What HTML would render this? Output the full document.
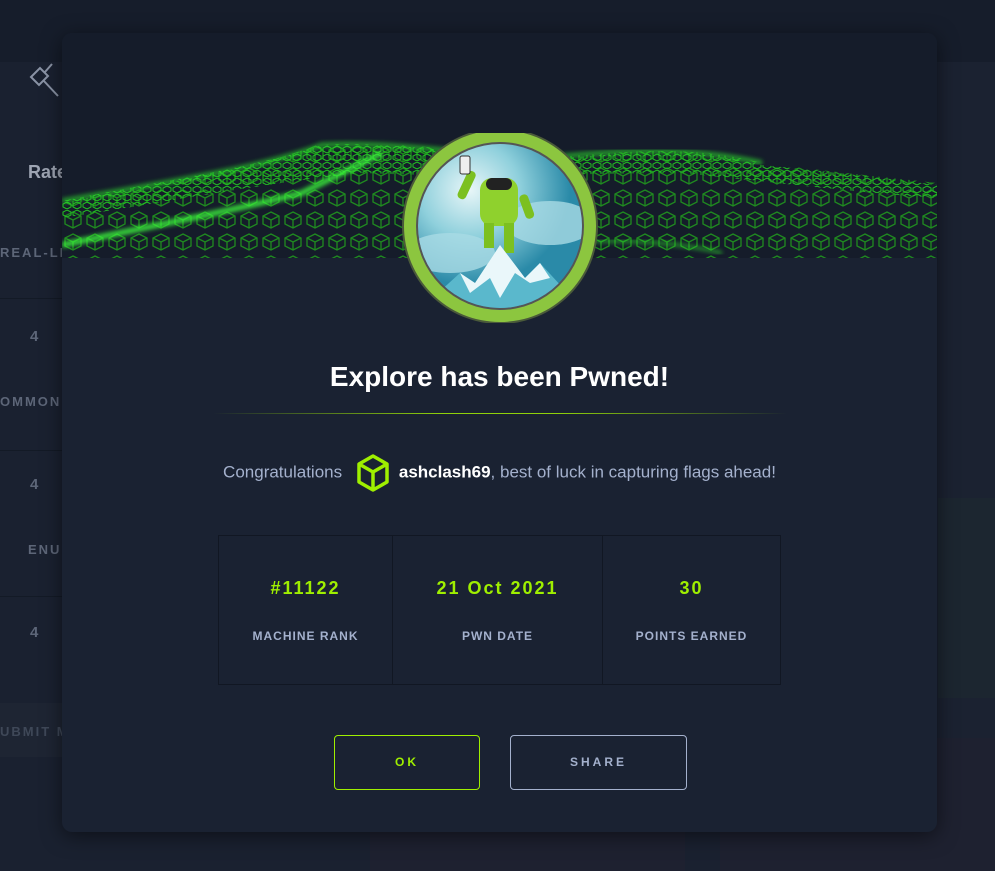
<!DOCTYPE html>
<html><head><meta charset="utf-8"><style>
*{margin:0;padding:0;box-sizing:border-box}
body{width:995px;height:871px;overflow:hidden;background:#1a2130;font-family:"Liberation Sans",sans-serif;position:relative}
.abs{position:absolute}
.bgtxt{position:absolute;color:#5d6678;font-size:13px;font-weight:bold;letter-spacing:2px}
.modal{position:absolute;left:62px;top:33px;width:875px;height:799px;background:#1a2232;border-radius:10px;box-shadow:0 4px 20px rgba(0,0,0,.5);overflow:hidden}
.banner{position:absolute;left:0;top:0;width:875px;height:225px;background:#151c2a}
h1{position:absolute;left:0;width:875px;top:328px;text-align:center;color:#fff;font-size:28px;font-weight:bold}
.div{position:absolute;left:151px;top:380px;width:574px;height:1px;background:linear-gradient(90deg,rgba(159,239,0,0),#8fd10a 40%,#8fd10a 60%,rgba(159,239,0,0))}
.cong{position:absolute;left:0;width:875px;top:421px;text-align:center;color:#a4b1cd;font-size:17px;line-height:30px}
.cong b{color:#fff}
.stats{position:absolute;left:156px;top:502px;width:563px;height:150px;border:1px solid #111723;display:flex}
.c{border-right:1px solid #111723;text-align:center}
.c:last-child{border-right:none}
.v{margin-top:42px;color:#9fef00;font-weight:bold;font-size:18px;letter-spacing:2px}
.l{margin-top:30px;color:#a4b1cd;font-weight:bold;font-size:12px;letter-spacing:1px}
.btn{position:absolute;top:702px;height:55px;border-radius:4px;text-align:center;line-height:53px;font-weight:bold;font-size:12px;letter-spacing:3px}
</style></head><body>
<div class="abs" style="left:0;top:0;width:995px;height:62px;background:#161d2b"></div>
<div class="abs" style="left:938px;top:62px;width:57px;height:770px;background:#1b2231"></div>
<div class="abs" style="left:938px;top:498px;width:57px;height:200px;background:#1c2630"></div>
<div class="abs" style="left:720px;top:738px;width:275px;height:133px;background:#1e2130"></div>
<div class="abs" style="left:370px;top:832px;width:315px;height:39px;background:#1e2130"></div>
<svg class="abs" style="left:28px;top:60px" width="40" height="40"><path d="M3 17 L12 8 L20 16 L11 25 Z M17 12 L24 4 M15 20 L30 36" stroke="#8a93a5" stroke-width="2" fill="none"/></svg>
<div class="abs" style="left:28px;top:162px;color:#9ea5b3;font-size:18px;font-weight:bold">Rate</div>
<div class="bgtxt" style="left:0;top:245px">REAL-LIFE</div>
<div class="abs" style="left:0;top:298px;width:62px;height:1px;background:#131a26"></div>
<div class="bgtxt" style="left:30px;top:328px;font-size:15px">4</div>
<div class="bgtxt" style="left:0;top:394px">OMMON V</div>
<div class="abs" style="left:0;top:450px;width:62px;height:1px;background:#131a26"></div>
<div class="bgtxt" style="left:30px;top:476px;font-size:15px">4</div>
<div class="bgtxt" style="left:28px;top:542px">ENUM</div>
<div class="abs" style="left:0;top:596px;width:62px;height:1px;background:#131a26"></div>
<div class="bgtxt" style="left:30px;top:624px;font-size:15px">4</div>
<div class="abs" style="left:0;top:703px;width:62px;height:54px;background:#1e2533"></div>
<div class="bgtxt" style="left:0;top:724px;color:#3f4858">UBMIT M</div>

<div class="modal">
<div class="banner">
<svg width="875" height="225">
<defs>
<pattern id="cb" width="22" height="22" patternUnits="userSpaceOnUse"><path d="M11 3 L19 7 L19 15 L11 19 L3 15 L3 7 Z M3 7 L11 11 L19 7 M11 11 L11 19" stroke="#1f8a1f" stroke-width="1.3" fill="none"/></pattern>
<pattern id="cs" width="10" height="8" patternUnits="userSpaceOnUse"><path d="M5 1 L9 3 L9 6 L5 8 L1 6 L1 3 Z" stroke="#22c022" stroke-width="1" fill="none"/></pattern>
<filter id="bl"><feGaussianBlur stdDeviation="2"/></filter>
</defs>
<path d="M0 170 C100 150 200 135 260 110 C320 105 400 120 480 125 C560 120 620 110 700 130 C780 140 830 145 875 150 L875 225 L0 225 Z" fill="url(#cb)"/>
<path d="M0 168 C100 148 200 133 260 112 C320 108 400 120 480 126 C560 122 620 112 700 132 C780 140 830 146 875 152 L875 165 C800 160 720 150 620 140 C540 140 420 145 300 140 C200 150 100 170 0 185 Z" fill="url(#cs)"/>
<path d="M0 212 C80 195 160 180 240 160 C280 140 300 130 320 120" stroke="#3cff3c" stroke-width="6" fill="none" filter="url(#bl)" opacity=".8"/>
<path d="M0 168 C100 150 200 135 260 112 C320 108 400 120 480 126" stroke="#2ee82e" stroke-width="5" fill="none" filter="url(#bl)" opacity=".6"/>
<path d="M480 125 C560 118 620 112 700 130" stroke="#2ee82e" stroke-width="5" fill="none" filter="url(#bl)" opacity=".6"/>
<path d="M440 215 C520 205 600 205 660 220" stroke="#2ee82e" stroke-width="4" fill="none" filter="url(#bl)" opacity=".5"/>
</svg>
</div>
<svg class="abs" style="left:338px;top:100px" width="200" height="190">
<defs><clipPath id="ic"><circle cx="100" cy="93" r="82"/></clipPath>
<radialGradient id="sky" cx="35%" cy="30%"><stop offset="0" stop-color="#e8f6f8"/><stop offset=".5" stop-color="#8fd0dc"/><stop offset="1" stop-color="#2a8aa8"/></radialGradient></defs>
<circle cx="100" cy="93" r="98" fill="#4a5a3a"/>
<circle cx="100" cy="93" r="96" fill="#8cc63f"/>
<circle cx="100" cy="93" r="84" fill="#555"/>
<g clip-path="url(#ic)">
<rect x="0" y="0" width="200" height="190" fill="url(#sky)"/>
<ellipse cx="150" cy="90" rx="45" ry="22" fill="#a9dbe5" opacity=".8"/>
<ellipse cx="50" cy="120" rx="45" ry="20" fill="#a9dbe5" opacity=".8"/>
<rect x="80" y="45" width="38" height="48" rx="12" fill="#8fd12d"/>
<rect x="86" y="45" width="26" height="12" rx="6" fill="#222"/>
<rect x="84" y="90" width="10" height="25" fill="#7cc020"/><rect x="104" y="90" width="10" height="30" fill="#7cc020"/>
<rect x="118" y="62" width="9" height="25" rx="4" fill="#7cc020" transform="rotate(-20 122 62)"/>
<rect x="63" y="37" width="9" height="30" rx="4" fill="#7cc020" transform="rotate(25 67 50)"/>
<rect x="60" y="23" width="10" height="18" rx="2" fill="#eee" stroke="#333"/>
<path d="M5 190 L60 140 L75 150 L100 112 L125 145 L140 130 L195 190 Z" fill="#5ab8cc"/>
<path d="M60 140 L75 150 L100 112 L125 145 L140 130 L150 145 L130 150 L115 140 L100 165 L90 145 L70 160 Z" fill="#eaf7fa"/>
</g>
</svg>
<h1>Explore has been Pwned!</h1>
<div class="div"></div>
<div class="cong">Congratulations <svg width="36" height="38" style="vertical-align:middle;margin:0 8px"><path d="M18 2 L32 10 L32 28 L18 36 L4 28 L4 10 Z M4 10 L18 18 L32 10 M18 18 L18 36" stroke="#9fef00" stroke-width="3.5" fill="none" stroke-linejoin="round"/></svg><b>ashclash69</b>, best of luck in capturing flags ahead!</div>
<div class="stats">
<div class="c" style="width:174px"><div class="v">#11122</div><div class="l">MACHINE RANK</div></div>
<div class="c" style="width:210px"><div class="v">21 Oct 2021</div><div class="l">PWN DATE</div></div>
<div class="c" style="width:177px"><div class="v">30</div><div class="l">POINTS EARNED</div></div>
</div>
<div class="btn" style="left:272px;width:146px;border:1px solid #9fef00;color:#9fef00">OK</div>
<div class="btn" style="left:448px;width:177px;border:1px solid #a4b1cd;color:#a4b1cd">SHARE</div>
</div>
</body></html>
